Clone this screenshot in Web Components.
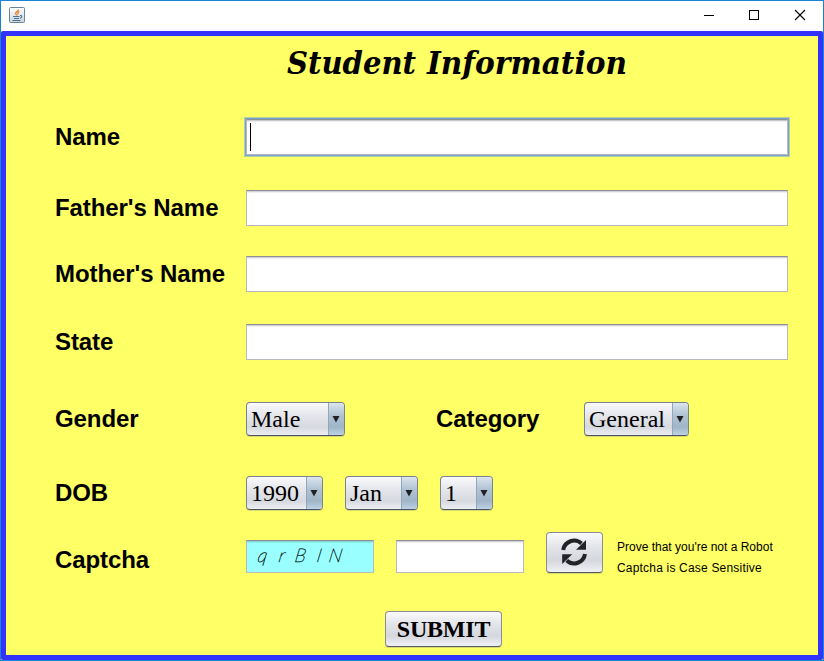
<!DOCTYPE html>
<html lang="en"><head><meta charset="utf-8"><title>Student Information</title>
<style>html,body{margin:0;height:100%;overflow:hidden}</style></head>
<body>
<student-window></student-window>
<script>
const define=(name,html,setup)=>customElements.define(name,class extends HTMLElement{
  constructor(){super();this.attachShadow({mode:'open'}).innerHTML=html;}
  connectedCallback(){if(setup)setup(this,this.shadowRoot);}
});

define('title-bar',`<style>
:host{display:flex;height:30px;background:#fff;align-items:flex-start}
.java{margin:6px 0 0 8px}.gap{flex:1}.ctl{width:46px;height:30px}.ctl:last-child{width:45px}
svg{display:block;flex:none}
</style>
<svg class="java" width="16" height="16" viewBox="0 0 16 16"><defs><linearGradient id="g" x2="0" y2="1"><stop stop-color="#fff"/><stop offset="1" stop-color="#c8d4de"/></linearGradient></defs>
<rect x=".5" y=".5" width="15" height="15" rx="1" fill="url(#g)" stroke="#6d8597"/>
<path d="M9.500 2.500C9.600 4.500 6 5 6.500 6.500C6.700 7.200 7.600 7.500 7.900 8.500M10.500 4.500C8.400 5.300 8.600 6.300 9.100 7.400" fill="none" stroke="#e8812d" stroke-width="1.300"/>
<path d="M4 9.500H10.500M5 11.500H10M3.500 13.500H11.500M11 8.500C13.800 8 12.900 10.800 11 11.200" fill="none" stroke="#4c7290" stroke-width="1.100"/></svg>
<span class="gap"></span>
<svg class="ctl" viewBox="0 0 46 30"><path d="M18 14.500H28" stroke="#000"/></svg>
<svg class="ctl" viewBox="0 0 46 30"><rect x="17.500" y="9.500" width="9" height="9" fill="none" stroke="#000" shape-rendering="crispEdges"/></svg>
<svg class="ctl" viewBox="0 0 45 30"><path d="M17 9L27 19M27 9L17 19" stroke="#000" stroke-width="1.100"/></svg>`);

define('form-label',`<style>
:host{display:block;flex:none;width:190px;font:bold 24px/36px "Liberation Sans",Arial,sans-serif;letter-spacing:-.08px;color:#000;white-space:nowrap}
:host([low]){line-height:34px}
</style><slot></slot>`);

define('text-box',`<style>
:host{display:block;flex:none;box-sizing:border-box;height:36px;width:542px;background:#fff;border:1px solid #b9b9bf;border-top-color:#8d8e96;box-shadow:inset 0 1px #d3d3d7,inset 0 2px #f0f0f2}
:host([focused]){box-shadow:inset 0 1px #c9c9ce,inset 0 2px #eeeef0,0 0 0 1px #73a4d1,0 0 0 2px #b3cfa0}
:host([small]){height:33px;width:128px}
:host([tinted]){background:#99ffff;box-shadow:inset 0 1px #7fd5d8,inset 0 2px #90f0f0}
i{display:none}:host([focused]) i{display:block;width:1px;height:28px;background:#000;margin:3px 0 0 3px}
</style><i></i><slot></slot>`);

define('combo-box',`<style>
:host{display:flex;flex:none;box-sizing:border-box;height:34px;border:1px solid #7b8290;border-bottom-color:#4c5364;border-radius:4px;overflow:hidden;background:linear-gradient(#fafafb,#e7e8ed 35%,#d6d9df 75%,#eceef2);font:24px/33px "Liberation Serif","Times New Roman",serif;color:#000;box-shadow:0 1px #d7d96b}
span{flex:1;padding-left:4px;white-space:nowrap}
b{width:15px;background:linear-gradient(#dbe5ee,#b1c3d3 38%,#a0b5c8 75%,#bdd2e2);border-left:1px solid #8fa8be;display:flex}
svg{margin:13px 0 0 3px}
</style><span><slot></slot></span><b><svg width="8" height="8"><path d="M.5 0H7.500L4 6.500Z" fill="#202124"/></svg></b>`);

define('push-button',`<style>
:host{display:flex;flex:none;box-sizing:border-box;align-items:center;justify-content:center;border:1px solid #8b8e98;border-bottom-color:#555965;border-radius:4px;background:linear-gradient(#fafafb,#e4e5ea 35%,#d5d7de 70%,#f0f1f5);box-shadow:0 1px #d7d96b;color:#000;font:bold 24px/34px "Liberation Serif","Times New Roman",serif;letter-spacing:-.2px}
</style><slot></slot>`);

define('refresh-icon',`<style>:host,svg{display:block}</style>
<svg width="27" height="29" viewBox="0 0 27 29"><g><path d="M2.200 12A11 11 0 0 1 20.500 5.500" fill="none" stroke="#222325" stroke-width="4"/><path d="M25 2V11.800H15Z" fill="#222325"/></g>
<g transform="rotate(180 13.100 14)"><path d="M2.200 12A11 11 0 0 1 20.500 5.500" fill="none" stroke="#222325" stroke-width="4"/><path d="M25 2V11.800H15Z" fill="#222325"/></g></svg>`);

define('form-row',`<style>:host{display:flex;align-items:flex-start;padding-left:49px}</style><slot></slot>`,
 h=>h.style.marginTop=(h.getAttribute('gap')||0)+'px');

define('student-window',`<style>
:host{display:flex;flex-direction:column;box-sizing:border-box;width:824px;height:661px;border:1px solid #1883d7;background:#ff6}
main{flex:1;box-sizing:border-box;border:5px solid #33f;border-radius:2px;background:#ff6}
h1{margin:0;height:50px}h1 svg{display:block}
.cat{margin-left:91px;width:148px}.g{margin-left:22px}
.note{font:12px/21px "Liberation Sans",Arial,sans-serif;margin:5px 0 0 14px;white-space:nowrap;color:#000}
.note div{width:max-content}
.note div+div{letter-spacing:.19px}
.cap svg{display:block}
</style>
<title-bar></title-bar>
<main>
<h1><svg width="812" height="50"><g font-family="DejaVu Serif Condensed,DejaVu Serif,serif" font-size="32" font-weight="bold" font-style="italic"><text x="281" y="38" textLength="129" lengthAdjust="spacingAndGlyphs">Student</text><text x="421" y="38" textLength="200" lengthAdjust="spacingAndGlyphs">Information</text></g></svg></h1>
<form-row gap="33"><form-label>Name</form-label><text-box focused style="margin-left:1px"></text-box></form-row>
<form-row gap="35"><form-label>Father's Name</form-label><text-box style="margin-left:1px"></text-box></form-row>
<form-row gap="30"><form-label>Mother's Name</form-label><text-box style="margin-left:1px"></text-box></form-row>
<form-row gap="32"><form-label>State</form-label><text-box style="margin-left:1px"></text-box></form-row>
<form-row gap="42"><form-label low>Gender</form-label><combo-box style="width:99px;margin-left:1px">Male</combo-box><form-label low class="cat">Category</form-label><combo-box style="width:105px">General</combo-box></form-row>
<form-row gap="40"><form-label low>DOB</form-label><combo-box style="width:77px;margin-left:1px">1990</combo-box><combo-box class="g" style="width:73px">Jan</combo-box><combo-box class="g" style="width:53px">1</combo-box></form-row>
<form-row gap="22"><form-label low style="padding-top:11px">Captcha</form-label><text-box small tinted class="cap" style="margin:8px 0 0 1px"><svg width="126" height="31" style="display:block"><text transform="translate(0 21) skewX(-10)" x="10 31 47 69 81" y="0" font-family="Lato" font-size="19" font-weight="100" font-style="italic" fill="#0c1e22" stroke="#0c1e22" stroke-width=".55">qrBIN</text></svg></text-box><text-box small class="g" style="margin-top:8px"></text-box><push-button class="g" style="width:57px;height:41px"><refresh-icon></refresh-icon></push-button><div class="note"><div>Prove that you're not a Robot</div><div>Captcha is Case Sensitive</div></div></form-row>
<form-row gap="32"><push-button style="width:117px;height:36px;margin-left:330px">SUBMIT</push-button></form-row>
</main>`);
</script></body></html>
